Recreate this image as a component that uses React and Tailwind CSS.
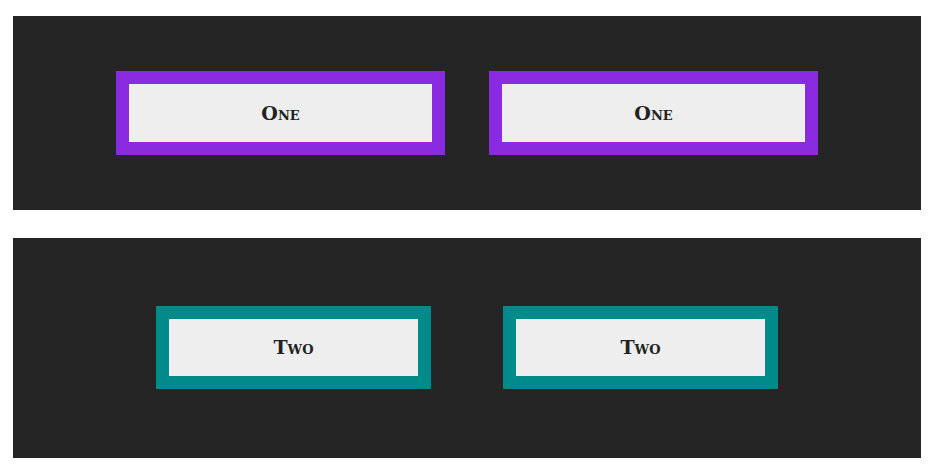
const buttonText = "font-['DejaVu_Serif',serif] font-bold [font-variant:small-caps] text-[19px] text-[#222]";

const Panel = ({ children, className }) => (
  <div className={`flex items-center justify-center bg-[#252525] ${className}`}>
    {children}
  </div>
);

const App = () => {
  return (
    <div className="min-h-[468px] bg-white px-[13px] pt-[16px] flex flex-col gap-[28px] w-[934px]">
      <Panel className="h-[194px] gap-[44px]">
        {[1, 2].map((i) => (
          <button
            key={i}
            className={`w-[329px] h-[84px] border-[13px] border-[#8a2be2] bg-[#eeeeee] flex items-center justify-center ${buttonText}`}
          >
            One
          </button>
        ))}
      </Panel>
      <Panel className="h-[220px] gap-[72px] pb-[2px]">
        {[1, 2].map((i) => (
          <button
            key={i}
            className={`w-[275px] h-[83px] border-[13px] border-[#008b8b] bg-[#eeeeee] flex items-center justify-center ${buttonText}`}
          >
            Two
          </button>
        ))}
      </Panel>
    </div>
  );
};

export default App;
